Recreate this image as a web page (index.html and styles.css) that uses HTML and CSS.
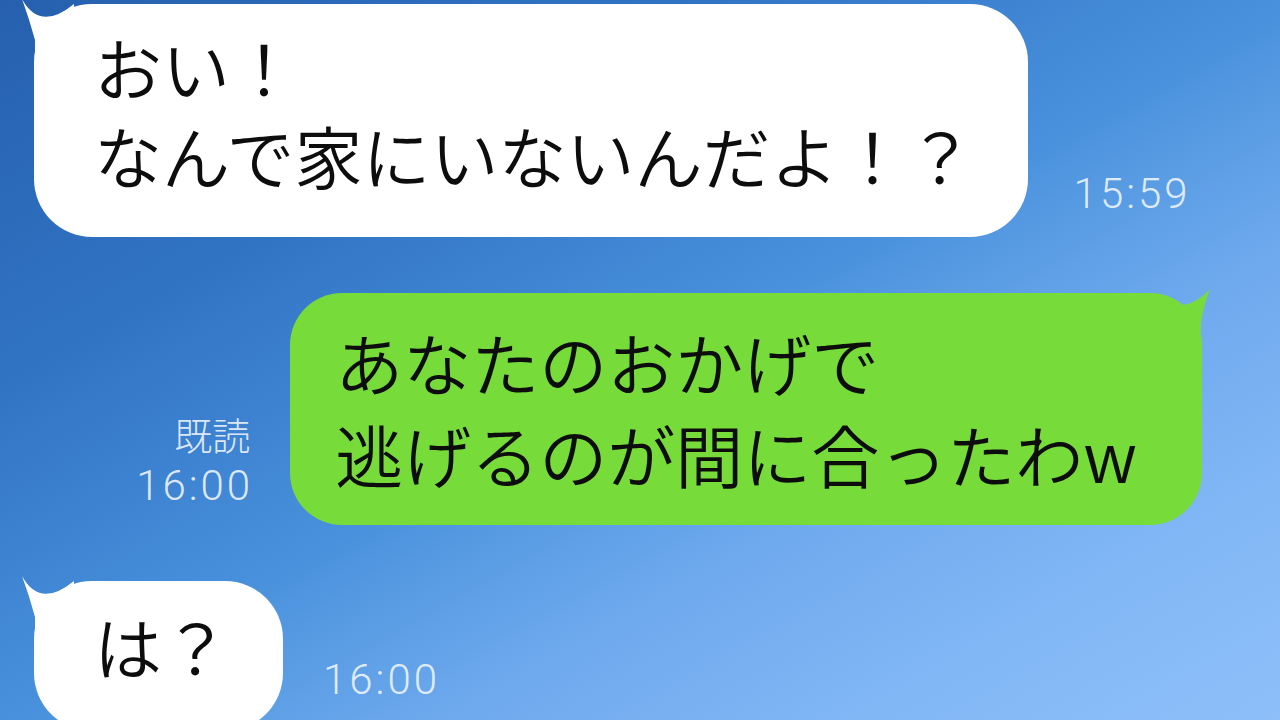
FILE: index.html
```html
<!DOCTYPE html>
<html lang="ja">
<head>
<meta charset="utf-8">
<title>トーク</title>
<link rel="stylesheet" href="styles.css">
</head>
<body>
<main class="chat">
  <div class="row row-in row-first">
    <div class="bubble bubble-white">
      <svg class="tail tail-left" width="60" height="60" viewBox="-14 -7 60 60" aria-hidden="true"><path d="M-12,-5 Q6,28 40,0 L40,50 L1,50 L1,36 Q-5,14 -12,-5 Z"/></svg>
      <p class="msg">おい！<br>なんで家にいないんだよ！？</p>
    </div>
    <div class="meta meta-1"><span class="time">15:59</span></div>
  </div>

  <div class="row row-out">
    <div class="meta meta-out"><span class="read">既読</span><span class="time">16:00</span></div>
    <div class="bubble bubble-green">
      <svg class="tail tail-right" width="60" height="60" viewBox="-50 -6 60 60" aria-hidden="true"><path d="M8,-4 Q-20,26 -48,0 L-48,50 L-1,50 L-1,30 Q2,10 8,-4 Z"/></svg>
      <p class="msg">あなたのおかげで<br>逃げるのが間に合ったわw</p>
    </div>
  </div>

  <div class="row row-in row-last">
    <div class="bubble bubble-white bubble-short">
      <svg class="tail tail-left" width="60" height="60" viewBox="-14 -7 60 60" aria-hidden="true"><path d="M-12,-5 Q6,28 40,0 L40,50 L1,50 L1,36 Q-5,14 -12,-5 Z"/></svg>
      <p class="msg">は？</p>
    </div>
    <div class="meta meta-3"><span class="time">16:00</span></div>
  </div>
</main>
</body>
</html>
```

FILE: styles.css
```css
html, body {
  margin: 0;
  padding: 0;
}

body {
  width: 1280px;
  height: 720px;
  overflow: hidden;
  background: linear-gradient(to bottom right,
    #2660ae 0%,
    #3174c4 27%,
    #4890dc 50%,
    #5a9de4 58%,
    #70aaee 68%,
    #82b8f6 85%,
    #8ebff9 100%);
  font-family: "Noto Sans CJK JP", "Noto Sans", sans-serif;
}

.chat {
  display: flex;
  flex-direction: column;
  padding-top: 4px;
}

.row {
  display: flex;
  align-items: flex-end;
}

.row-in {
  padding-left: 34px;
}

.row-out {
  justify-content: flex-end;
  padding-right: 78px;
  margin-top: 56px;
}

.row-last {
  margin-top: 56px;
}

.bubble {
  position: relative;
  color: #0d0d0d;
  font-size: 68px;
  font-weight: 350;
  line-height: 88px;
}

.bubble-white {
  background: #ffffff;
  fill: #ffffff;
  border-radius: 58px;
  padding: 19px 53px 38px 60px;
}

.bubble-short {
  padding: 21px 53px 41px 60px;
}

.bubble-green {
  background: #77dc3a;
  fill: #77dc3a;
  border-radius: 52px;
  padding: 23px 65px 25px 45px;
  line-height: 92px;
}

.msg {
  margin: 0;
  position: relative;
  white-space: nowrap;
}

.tail {
  position: absolute;
  top: -7px;
  display: block;
}

.tail-left {
  left: -14px;
}

.tail-right {
  top: -6px;
  right: -10px;
}

.meta {
  display: flex;
  flex-direction: column;
  color: rgba(240, 246, 253, 0.9);
}

.time {
  font-family: Roboto, "Noto Sans", sans-serif;
  font-weight: 300;
  font-size: 42px;
  line-height: 48px;
  letter-spacing: 3px;
}

.read {
  font-family: "Noto Sans CJK JP", sans-serif;
  font-weight: 300;
  font-size: 38px;
  line-height: 44px;
  margin-right: 3px;
}

.meta-1 {
  margin-left: 46px;
  margin-bottom: 19px;
}

.meta-out {
  align-items: flex-end;
  margin-right: 37px;
  margin-bottom: 15px;
  gap: 6px;
}

.meta-3 {
  margin-left: 40px;
  margin-bottom: 27px;
}
```
